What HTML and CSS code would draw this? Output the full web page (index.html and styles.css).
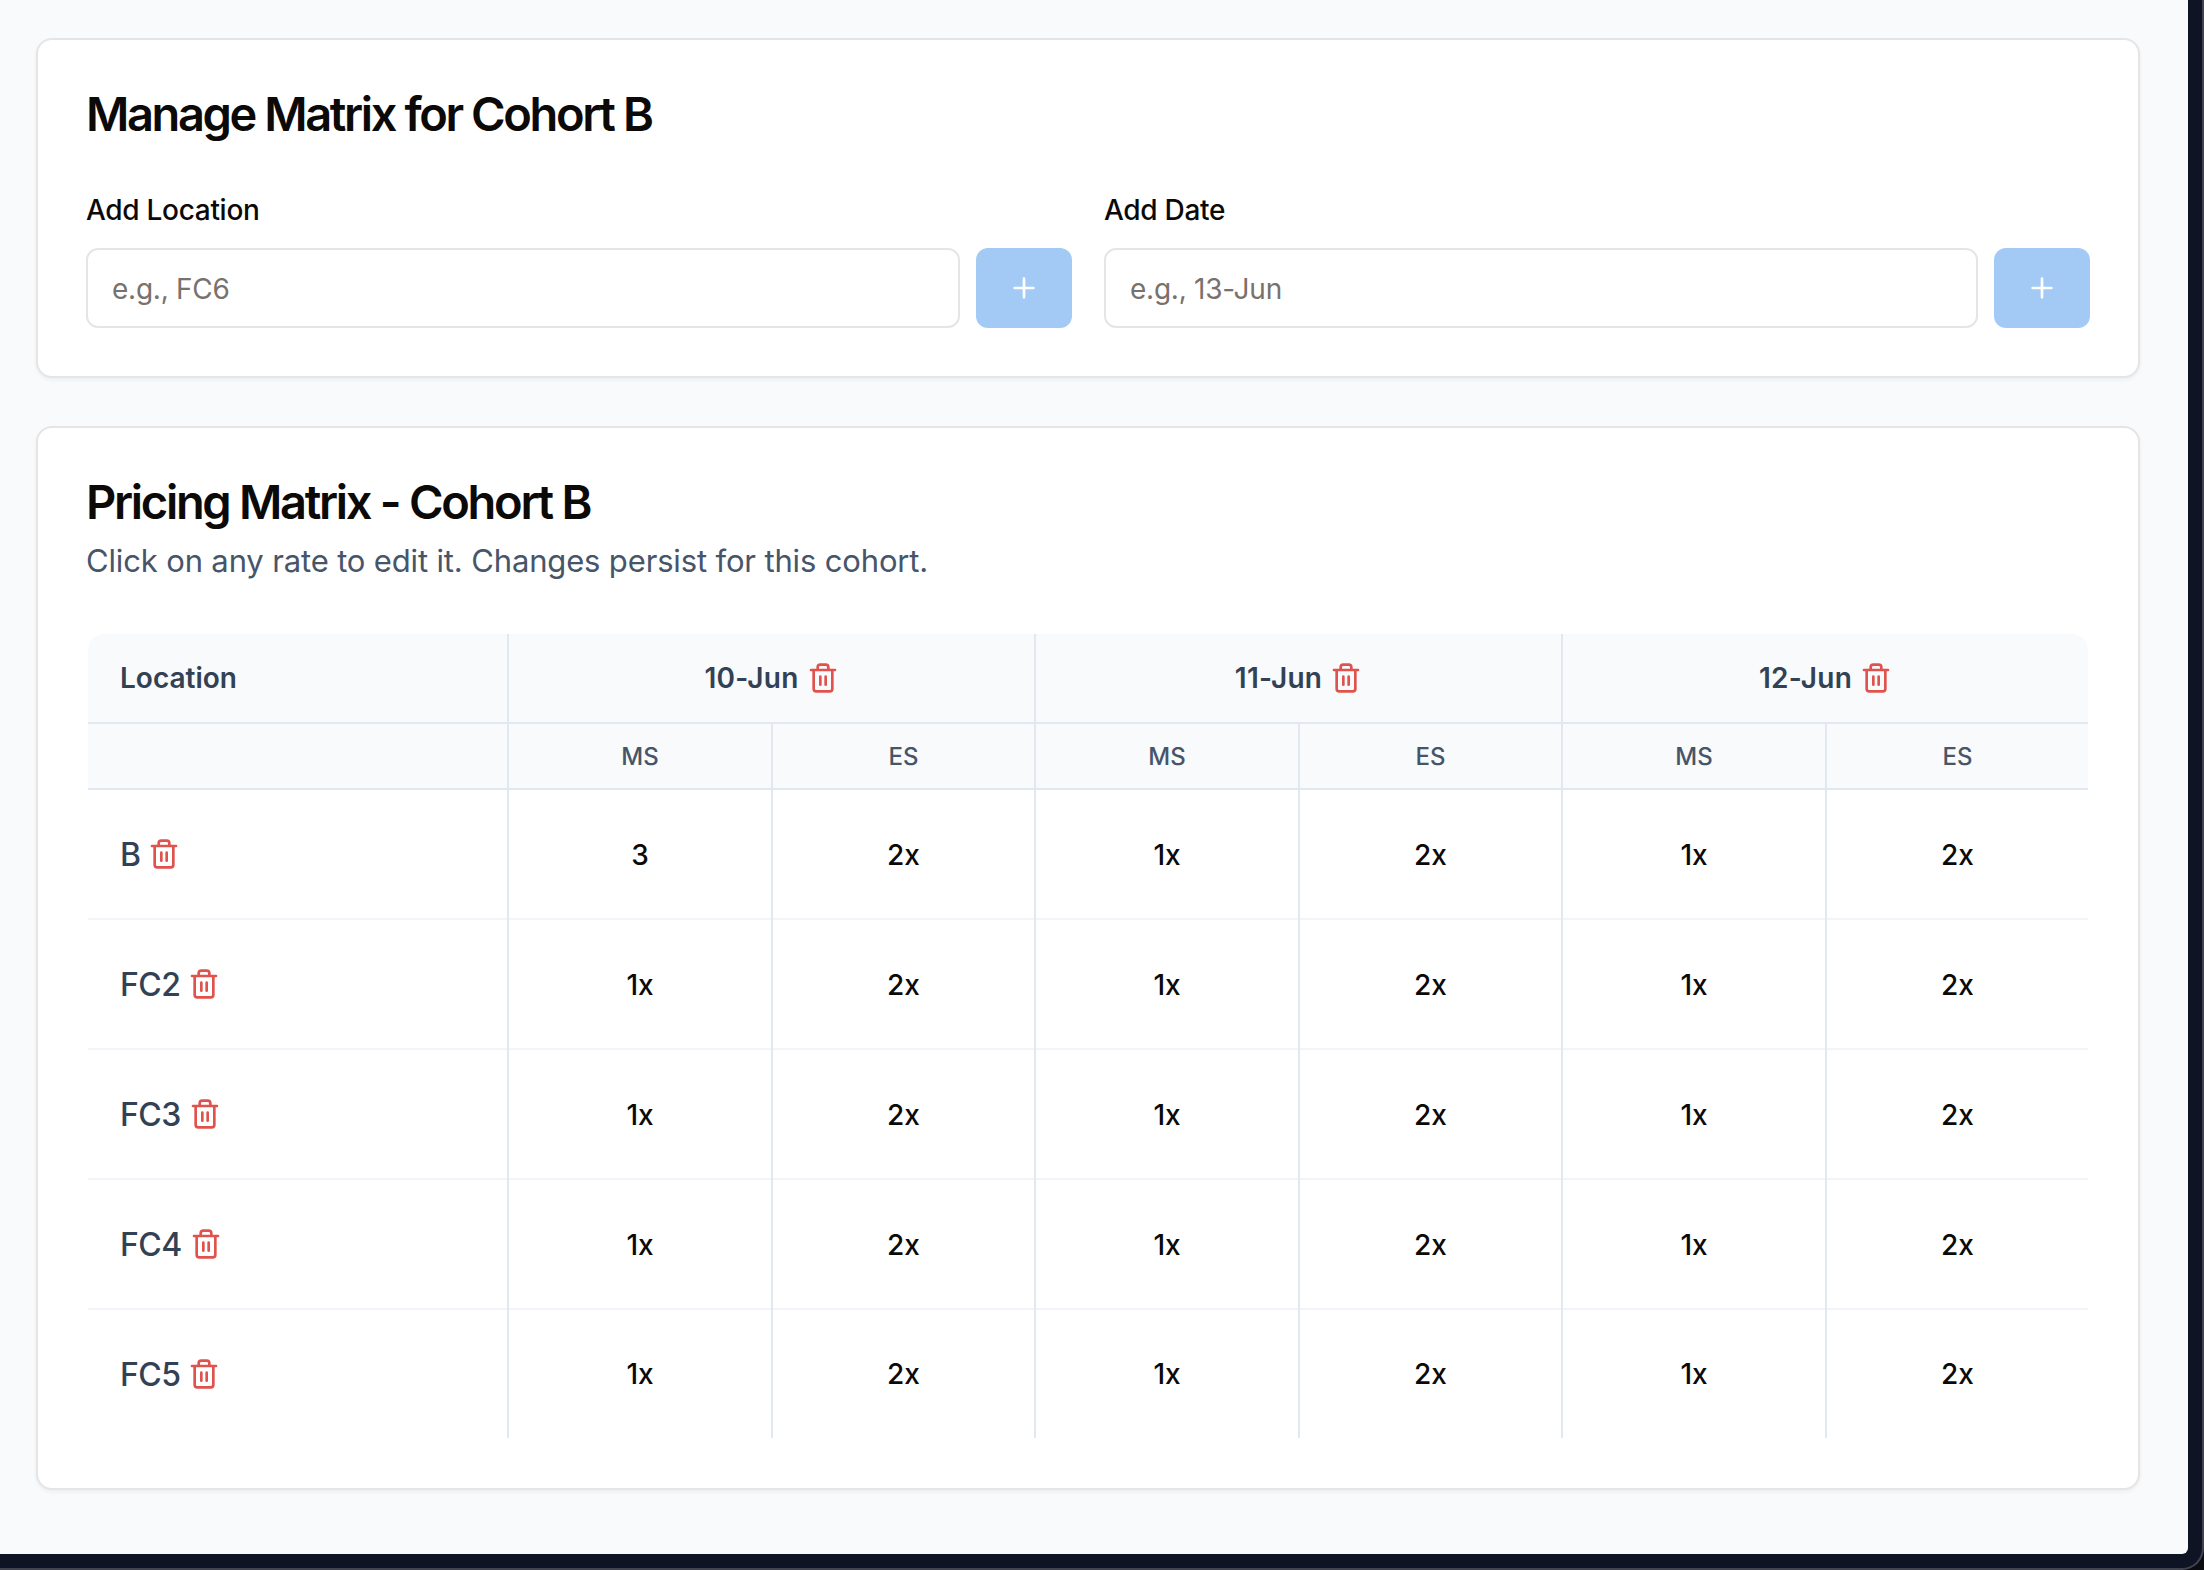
FILE: index.html
```html
<!DOCTYPE html>
<html lang="en">
<head>
<meta charset="utf-8">
<title>Cohort Pricing Matrix</title>
<link rel="stylesheet" href="styles.css">
</head>
<body>
<svg class="sprite" aria-hidden="true">
  <symbol id="trash" viewBox="0 0 24 24"><path d="M3 6h18M19 6v14a2 2 0 0 1-2 2H7a2 2 0 0 1-2-2V6M8 6V4a2 2 0 0 1 2-2h4a2 2 0 0 1 2 2v2M10 11v6M14 11v6"/></symbol>
  <symbol id="plus" viewBox="0 0 24 24"><path d="M5 12h14M12 5v14"/></symbol>
</svg>
<div class="window">
  <main class="page">
    <section class="card">
      <h2 class="title">Manage Matrix for Cohort B</h2>
      <div class="forms">
        <div class="field">
          <label class="label" for="location">Add Location</label>
          <div class="control">
            <input class="input" id="location" placeholder="e.g., FC6">
            <button class="add" disabled aria-label="Add location"><svg class="icon"><use href="#plus"/></svg></button>
          </div>
        </div>
        <div class="field">
          <label class="label" for="date">Add Date</label>
          <div class="control">
            <input class="input" id="date" placeholder="e.g., 13-Jun">
            <button class="add" disabled aria-label="Add date"><svg class="icon"><use href="#plus"/></svg></button>
          </div>
        </div>
      </div>
    </section>
    <section class="card card-matrix">
      <h2 class="title">Pricing Matrix - Cohort B</h2>
      <p class="description">Click on any rate to edit it. Changes persist for this cohort.</p>
      <table class="matrix">
        <colgroup><col class="col-location"><col class="col-ms"><col class="col-es"><col class="col-ms"><col class="col-es"><col class="col-ms"><col></colgroup>
        <thead>
          <tr class="dates">
            <th class="location">Location</th>
            <th colspan="2"><div class="item">10-Jun<svg class="icon trash"><use href="#trash"/></svg></div></th>
            <th colspan="2"><div class="item">11-Jun<svg class="icon trash"><use href="#trash"/></svg></div></th>
            <th colspan="2"><div class="item">12-Jun<svg class="icon trash"><use href="#trash"/></svg></div></th>
          </tr>
          <tr class="types"><th></th><th>MS</th><th>ES</th><th>MS</th><th>ES</th><th>MS</th><th>ES</th></tr>
        </thead>
        <tbody>
          <tr><td class="location"><div class="item">B<svg class="icon trash"><use href="#trash"/></svg></div></td><td>3</td><td>2x</td><td>1x</td><td>2x</td><td>1x</td><td>2x</td></tr>
          <tr><td class="location"><div class="item">FC2<svg class="icon trash"><use href="#trash"/></svg></div></td><td>1x</td><td>2x</td><td>1x</td><td>2x</td><td>1x</td><td>2x</td></tr>
          <tr><td class="location"><div class="item">FC3<svg class="icon trash"><use href="#trash"/></svg></div></td><td>1x</td><td>2x</td><td>1x</td><td>2x</td><td>1x</td><td>2x</td></tr>
          <tr><td class="location"><div class="item">FC4<svg class="icon trash"><use href="#trash"/></svg></div></td><td>1x</td><td>2x</td><td>1x</td><td>2x</td><td>1x</td><td>2x</td></tr>
          <tr><td class="location"><div class="item">FC5<svg class="icon trash"><use href="#trash"/></svg></div></td><td>1x</td><td>2x</td><td>1x</td><td>2x</td><td>1x</td><td>2x</td></tr>
        </tbody>
      </table>
    </section>
  </main>
</div>
</body>
</html>
```
FILE: styles.css
```css
* { box-sizing: border-box; }

body {
  margin: 0;
  background: #0b0c12;
  font-family: Inter, "Liberation Sans", sans-serif;
  color: #0c0a09;
}

.sprite { display: none; }

.window {
  height: 1570px;
  padding: 0 14px 14px 0;
  background: #0f1424;
  border: solid #41434f;
  border-width: 0 2px 2px 0;
  border-bottom-right-radius: 22px;
}

.page {
  display: flex;
  flex-direction: column;
  gap: 48px;
  height: 1554px;
  padding: 38px 48px 64px 36px;
  background: #f8fafc;
  border-bottom-right-radius: 6px;
}

.card {
  padding: 48px;
  background: #fff;
  border: 2px solid #e5e5e5;
  border-radius: 16px;
  box-shadow: 0 2px 4px rgba(0, 0, 0, 0.05);
}

.card-matrix { padding-bottom: 50px; }

.title {
  margin: 0;
  padding-top: 2px;
  font-size: 47px;
  line-height: 48px;
  font-weight: 600;
  letter-spacing: -2.4px;
}

.card-matrix .title { letter-spacing: -2.3px; }

.forms {
  display: grid;
  grid-template-columns: 1fr 1fr;
  gap: 32px;
  margin-top: 58px;
}

.label {
  display: block;
  margin-bottom: 24px;
  font-size: 28px;
  line-height: 28px;
  font-weight: 500;
  letter-spacing: -0.3px;
}

.control { display: flex; gap: 16px; }

.input {
  flex: 1;
  min-width: 0;
  height: 80px;
  padding: 2px 24px 0;
  border: 2px solid #e5e5e5;
  border-radius: 12px;
  background: #fff;
  font: 400 28px/40px Inter, "Liberation Sans", sans-serif;
  letter-spacing: -0.25px;
}

.input::placeholder { color: #78716c; opacity: 1; }

.add {
  display: flex;
  align-items: center;
  justify-content: center;
  width: 96px;
  height: 80px;
  padding: 0;
  border: 0;
  border-radius: 12px;
  background: #a3c9f5;
  color: #fff;
}

.icon {
  flex: none;
  width: 32px;
  height: 32px;
  fill: none;
  stroke: currentColor;
  stroke-width: 2;
  stroke-linecap: round;
  stroke-linejoin: round;
}

.trash { color: #e0524c; }

.description {
  margin: 11px 0 0;
  font-size: 31px;
  line-height: 48px;
  letter-spacing: -0.15px;
  color: #475569;
}

.matrix {
  width: 2000px;
  margin: 49px 2px 0;
  table-layout: fixed;
  border-collapse: separate;
  border-spacing: 0;
  border-radius: 16px;
  overflow: hidden;
}

.col-location { width: 421px; }
.col-ms { width: 264px; }
.col-es { width: 263px; }

.matrix th,
.matrix td {
  padding: 0 2px 0 0;
  text-align: center;
  box-shadow: inset -2px 0 #e2e8f0, inset 0 -2px var(--row-line);
}

.matrix th { --row-line: #e2e8f0; background: #f8fafc; }
.matrix td { --row-line: #f1f5f9; height: 130px; padding-bottom: 1px; font-size: 28px; font-weight: 500; }

.matrix tr > :last-child { padding-right: 0; box-shadow: inset 0 -2px var(--row-line); }
.matrix tbody tr:last-child td { height: 128px; padding-bottom: 0; box-shadow: inset -2px 0 #e2e8f0; }
.matrix tbody tr:last-child td:last-child { box-shadow: none; }

.dates th { height: 90px; padding-bottom: 2px; font-size: 28px; font-weight: 600; color: #334155; }
.types th { height: 66px; padding-bottom: 2px; font-size: 24px; font-weight: 500; color: #475569; }

.matrix .location { padding-left: 32px; text-align: left; }
.matrix td.location { padding-bottom: 2px; font-size: 32px; letter-spacing: -0.6px; color: #334155; }
.matrix tbody tr:last-child td.location { padding-bottom: 0; }
.dates .item { letter-spacing: 0.25px; }

.item { display: flex; align-items: center; justify-content: center; gap: 8px; }
.location .item { justify-content: flex-start; }
```
